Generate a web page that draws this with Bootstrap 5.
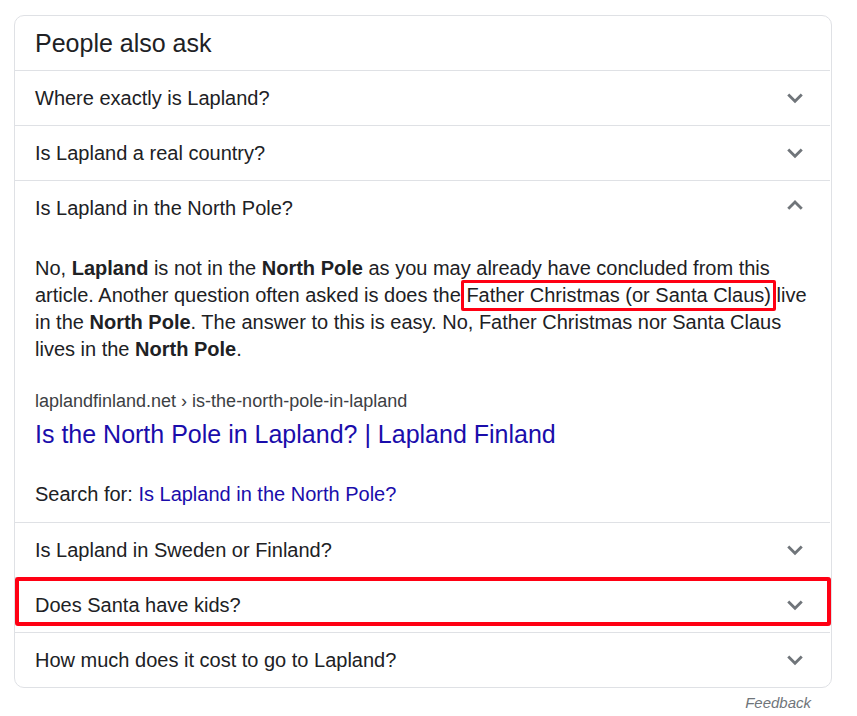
<!DOCTYPE html>
<html lang="en">
<head>
<meta charset="utf-8">
<meta name="viewport" content="width=device-width, initial-scale=1">
<title>People also ask</title>
<link href="https://cdn.jsdelivr.net/npm/bootstrap@5.3.0/dist/css/bootstrap.min.css" rel="stylesheet">
<style>
body { font-family: "Liberation Sans", Arial, sans-serif; color: #202124; background: #fff; font-size: 20px; line-height: 27px; }
.paa { margin: 15px 25px 0 14px; }
.paa-box { border: 1px solid #dfe1e5; border-radius: 10px; padding-right: 1px; }
.paa-title { font-size: 25px; line-height: 30px; padding: 12px 20px; }
.paa-item { border-top: 1px solid #dfe1e5; }
.paa-q { height: 54px; padding: 0 20px; background: none; border: 0; color: inherit; }
.paa-q svg { width: 30px; height: 30px; fill: #70757a; }
.paa-answer { padding: 20px 20px 14px; }
.paa-mark { position: relative; }
.paa-mark::before { content: ""; position: absolute; inset: -4px -5px -5px; border: 3px solid #ff0013; border-radius: 2px; }
.paa-row-mark { position: relative; }
.paa-row-mark::after { content: ""; position: absolute; inset: -1px -1px 6px 0; border: 4px solid #ff0013; border-radius: 3px; pointer-events: none; }
.paa-cite { font-size: 18px; line-height: 28px; color: #3c4043; }
.paa-link { font-size: 25px; line-height: 38px; }
.paa a { color: #1a0dab; }
.paa-foot { padding: 5px 21px 0; line-height: 20px; }
.paa .paa-feedback { font-size: 15px; color: #70757a; }
</style>
<script src="https://cdn.jsdelivr.net/npm/bootstrap@5.3.0/dist/js/bootstrap.bundle.min.js"></script>
</head>
<body>
<main class="paa">
  <section class="paa-box">
    <h1 class="paa-title fw-normal m-0">People also ask</h1>
    <div class="paa-item">
      <button type="button" class="paa-q w-100 d-flex align-items-center justify-content-between text-start" aria-expanded="false">Where exactly is Lapland?<svg viewBox="0 0 24 24" aria-hidden="true"><path d="M16.6 8.4 12 13 7.4 8.4 5.8 10l6.2 6.2 6.2-6.2z"/></svg></button>
    </div>
    <div class="paa-item">
      <button type="button" class="paa-q w-100 d-flex align-items-center justify-content-between text-start" aria-expanded="false">Is Lapland a real country?<svg viewBox="0 0 24 24" aria-hidden="true"><path d="M16.6 8.4 12 13 7.4 8.4 5.8 10l6.2 6.2 6.2-6.2z"/></svg></button>
    </div>
    <div class="paa-item">
      <button type="button" class="paa-q w-100 d-flex align-items-center justify-content-between text-start" aria-expanded="true" aria-controls="answer">Is Lapland in the North Pole?<svg class="mb-1" viewBox="0 0 24 24" aria-hidden="true"><path d="M12 7.2l-6.2 6.2L7.4 15l4.6-4.6 4.6 4.6 1.6-1.6z"/></svg></button>
      <div class="paa-answer" id="answer">
        <p class="mb-4">No, <b>Lapland</b> is not in the <b>North Pole</b> as you may already have concluded from this article. Another question often asked is does the <span class="paa-mark">Father Christmas (or Santa Claus)</span> live in the <b>North Pole</b>. The answer to this is easy. No, Father Christmas nor Santa Claus lives in the <b>North Pole</b>.</p>
        <div class="paa-cite">laplandfinland.net › is-the-north-pole-in-lapland</div>
        <a class="paa-link d-block text-decoration-none mb-4" href="#">Is the North Pole in Lapland? | Lapland Finland</a>
        <div class="pt-1">Search for: <a class="text-decoration-none" href="#">Is Lapland in the North Pole?</a></div>
      </div>
    </div>
    <div class="paa-item">
      <button type="button" class="paa-q w-100 d-flex align-items-center justify-content-between text-start" aria-expanded="false">Is Lapland in Sweden or Finland?<svg viewBox="0 0 24 24" aria-hidden="true"><path d="M16.6 8.4 12 13 7.4 8.4 5.8 10l6.2 6.2 6.2-6.2z"/></svg></button>
    </div>
    <div class="paa-item paa-row-mark">
      <button type="button" class="paa-q w-100 d-flex align-items-center justify-content-between text-start" aria-expanded="false">Does Santa have kids?<svg viewBox="0 0 24 24" aria-hidden="true"><path d="M16.6 8.4 12 13 7.4 8.4 5.8 10l6.2 6.2 6.2-6.2z"/></svg></button>
    </div>
    <div class="paa-item">
      <button type="button" class="paa-q w-100 d-flex align-items-center justify-content-between text-start" aria-expanded="false">How much does it cost to go to Lapland?<svg viewBox="0 0 24 24" aria-hidden="true"><path d="M16.6 8.4 12 13 7.4 8.4 5.8 10l6.2 6.2 6.2-6.2z"/></svg></button>
    </div>
  </section>
  <div class="paa-foot d-flex justify-content-end"><a class="paa-feedback fst-italic text-decoration-none" href="#">Feedback</a></div>
</main>
</body>
</html>
